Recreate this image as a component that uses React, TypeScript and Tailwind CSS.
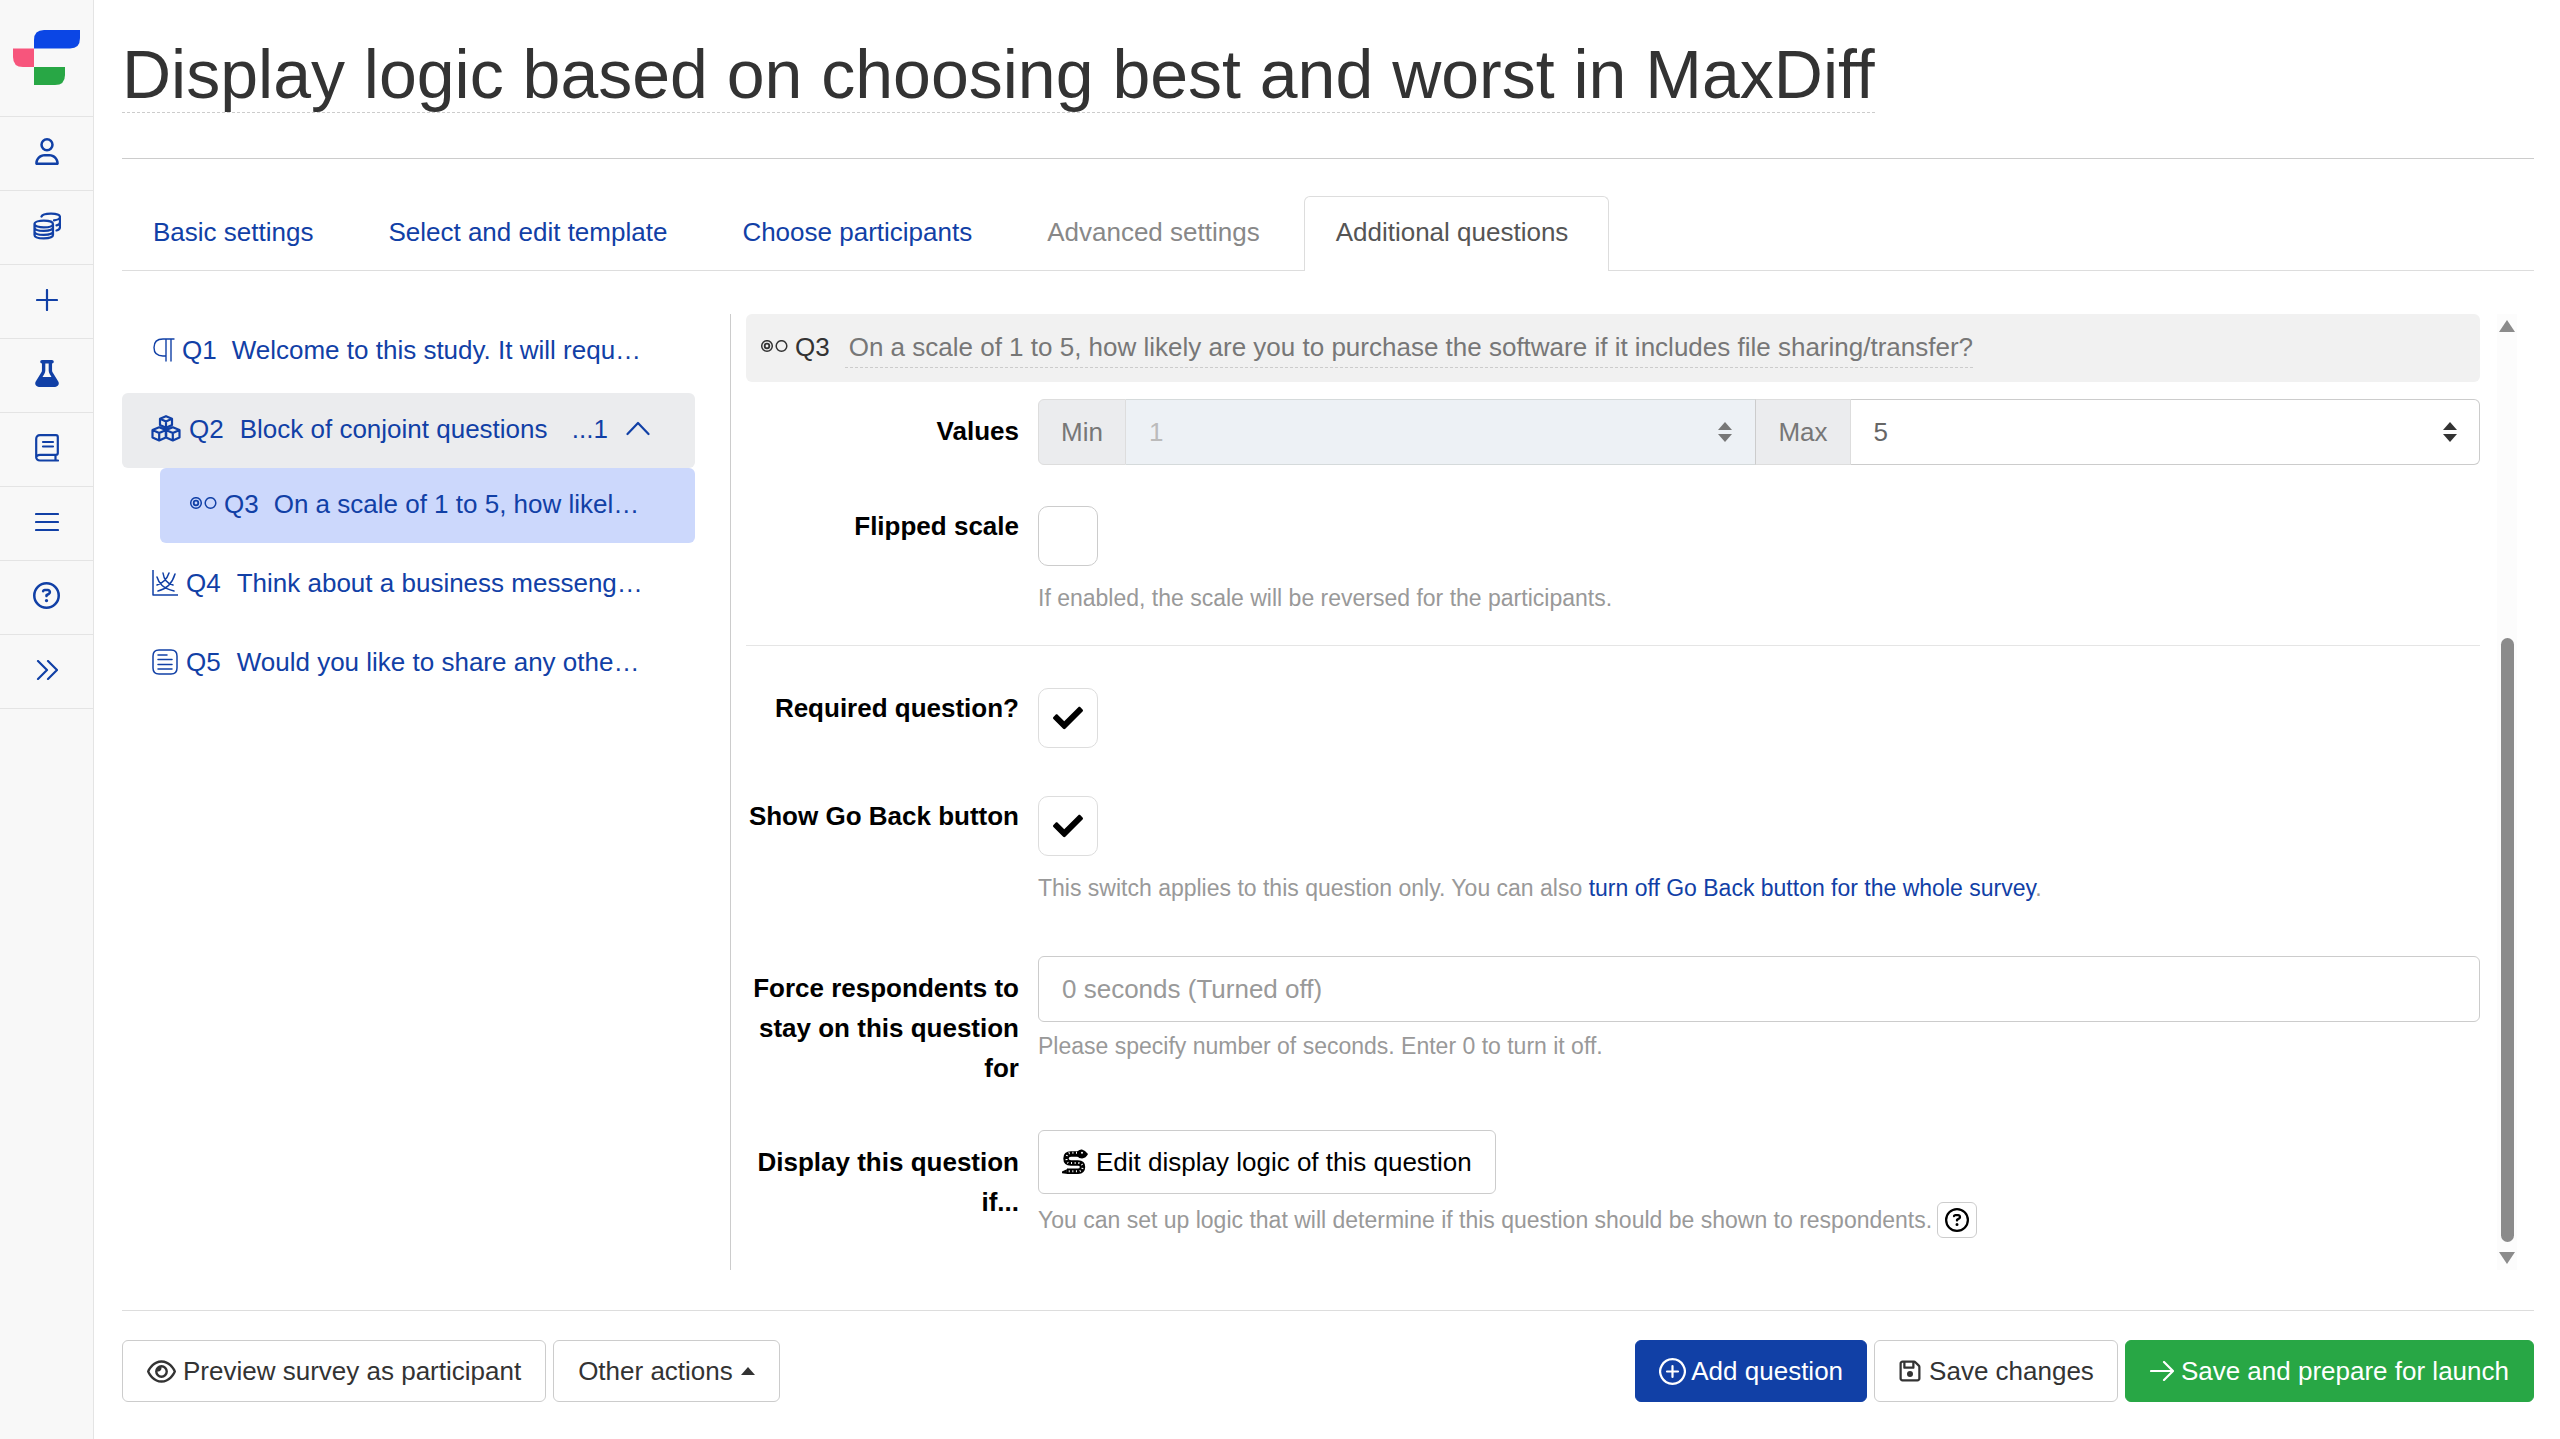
import React from "react";
import { FaRegUser, FaFlask, FaRegCircleQuestion, FaRegEye, FaRegFloppyDisk } from "react-icons/fa6";
import { FaCheck } from "react-icons/fa";

const Stroke = ({ d, w, h, box, sw = 3 }: { d: string; w: number; h: number; box: string; sw?: number }) => (
  <svg width={w} height={h} viewBox={box} fill="none" stroke="currentColor" strokeWidth={sw} strokeLinecap="round" strokeLinejoin="round" aria-hidden="true" className="shrink-0">
    <path d={d} />
  </svg>
);

const Logo = () => (
  <svg width="68" height="56" viewBox="0 0 68 56" role="img" aria-label="Home">
    <path d="M21 18.500V10Q21 0 31 0H67V8Q67 18.500 57 18.500Z" fill="#0b46e5" />
    <path d="M0 18.500H21V37H10Q0 37 0 27Z" fill="#f7557c" />
    <path d="M21 37H52V45Q52 55 42 55H21Z" fill="#28a745" />
  </svg>
);

const Coins = () => (
  <Stroke w={28} h={28} box="0 0 28 28" sw={2.2}
    d="M1.500 12C1.500 7.500 20 7.500 20 12C20 16.500 1.500 16.500 1.500 12V23C1.500 27.500 20 27.500 20 23V12M1.500 15.500C1.500 20 20 20 20 15.500M1.500 19.500C1.500 24 20 24 20 19.500M8.500 4.500C10 0.500 27 0.500 27 5V15C27 17 25.500 18 23.500 18.500M27 5C27 7 24 8 21 8.300M27 10C27 12 25.500 13 23.500 13.300" />
);
const Book = () => (
  <Stroke w={24} h={28} box="0 0 24 28" sw={2.2}
    d="M23 26.500H5C2.500 26.500 1.200 25 1.200 23V5C1.200 2.500 2.500 1.200 5 1.200H21C22.300 1.200 22.800 1.700 22.800 3V19C22.800 20.300 22.300 20.800 21 20.800H5C2.500 20.800 1.200 22.300 1.200 24M20.500 21V26M8 8H18M8 12.500H18" />
);

const navItems = [
  { label: "Account", icon: <FaRegUser className="h-[27px] w-6" /> },
  { label: "Credits", icon: <Coins /> },
  { label: "Create", icon: <Stroke w={22} h={22} box="0 0 22 22" sw={2.2} d="M11 1V21M1 11H21" /> },
  { label: "Experiments", icon: <FaFlask className="h-[27px] w-6" /> },
  { label: "Guides", icon: <Book /> },
  { label: "Menu", icon: <Stroke w={24} h={20} box="0 0 24 20" sw={2.2} d="M1 2H23M1 10H23M1 18H23" /> },
  { label: "Help", icon: <FaRegCircleQuestion className="size-[27px]" /> },
  { label: "Expand", icon: <Stroke w={22} h={20} box="0 0 22 20" sw={2.2} d="M2 1L11 10L2 19M12 1L21 10L12 19" /> },
];

const Pilcrow = () => <Stroke w={22} h={24} box="0 0 22 24" sw={1.4} d="M21 1H10C4 1 1 4 1 9.500S4 18 10 18H13M13 1V23M18 1V23" />;
const Radios = () => (
  <svg width="28" height="14" viewBox="0 0 28 14" fill="none" stroke="currentColor" aria-hidden="true" className="shrink-0">
    <circle cx="7" cy="6" r="5.300" strokeWidth="1.500" />
    <circle cx="7" cy="6" r="2.300" strokeWidth="1.800" />
    <circle cx="21.500" cy="6" r="5.300" strokeWidth="1.500" />
  </svg>
);
const Chart = () => <Stroke w={26} h={26} box="0 0 26 26" sw={1.5} d="M1 0V25H26M5 7C7 14 11 18 22 21M11 3C12 9 14 13 21 15M23 4C20 14 15 19 6 21M17 3C15 9 11 13 5 15" />;
const Note = () => <Stroke w={26} h={26} box="0 0 26 26" sw={1.5} d="M7 1H19Q25 1 25 7V19Q25 25 19 25H7Q1 25 1 19V7Q1 1 7 1ZM6 6H15M6 10.500H20M6 15.500H20M6 20H20" />;
const Cubes = () => (
  <Stroke w={30} h={27} box="0 0 30 27" sw={2.2}
    d="M15 1.200L21 3.700V10L15 12.800L9 10V3.700ZM9.500 4L15 6.500L20.500 4M15 6.500V12.500M8.200 12.300L14.800 15V22.500L8.200 25.500L1.500 22.500V15ZM2 15.200L8.200 18L14.500 15.200M8.200 18V25M21.800 12.300L28.500 15V22.500L21.800 25.500L15.200 22.500V15ZM15.500 15.200L21.800 18L28 15.200M21.800 18V25" />
);
const Snake = () => (
  <svg width="26" height="26" viewBox="0 0 26 26" fill="none" aria-hidden="true" className="shrink-0">
    <path d="M17 5H9Q4 5 4 9.500T9 14H16Q20.500 14 20.500 18T16 22.300H5" stroke="currentColor" strokeWidth="5.400" />
    <path d="M6 19.800V25L0 24.200Q-0.500 22.500 1 22Z" fill="currentColor" />
    <path d="M15 3Q17 0 20 0.500Q23 1 26 5Q24 9 20 9.500Q17 9.500 15 7Z" fill="currentColor" />
    <path d="M15 3.700H9Q4.500 4 4.500 9.500T9 14H16Q20.500 14 20.500 18T16 22.300H4" stroke="#fff" strokeWidth="2" strokeDasharray="1 2.600" />
    <circle cx="20" cy="3.700" r="1" fill="#fff" />
  </svg>
);

const Caret = ({ cls }: { cls: string }) => (
  <svg width="16" height="20" viewBox="0 0 16 20" fill="currentColor" aria-hidden="true" className={cls}>
    <path d="M8 0L15 8H1ZM8 20L15 12H1Z" />
  </svg>
);

const label = "w-[273px] shrink-0 text-right font-bold text-black";
const btn = "flex items-center rounded-md border whitespace-nowrap";
const hint = "text-[23px] leading-8 text-[#999]";
const tab = "pt-4 pb-[18px]";

const Check = ({ id, checked }: { id: string; checked?: boolean }) => (
  <span className="relative block size-[60px]">
    <input id={id} type="checkbox" defaultChecked={checked} className={checked ? "peer block size-[60px] appearance-none rounded-[10px] border border-[#ddd]" : "peer block size-[60px] appearance-none rounded-[10px] border border-[#ccc]"} />
    <FaCheck className="pointer-events-none absolute inset-0 m-auto hidden size-[30px] text-black peer-checked:block" />
  </span>
);

const QuestionLink = ({ icon, id, text, cls }: { icon: React.ReactNode; id: string; text: string; cls: string }) => (
  <a href="#" className={"flex h-[75px] items-center pb-1 whitespace-nowrap " + cls}>
    {icon}
    <span>{id}</span>
    <span className="pl-2">{text}</span>
  </a>
);

export default function App() {
  return (
    <div className="flex min-h-screen bg-white font-['Liberation_Sans',Arial,sans-serif] text-[26px] leading-10 text-[#333]">
      <nav aria-label="Main" className="w-[94px] shrink-0 border-r border-[#e4e4e4] bg-[#f8f8f8]">
        <a href="#" className="flex h-[117px] items-center justify-center border-b border-[#e4e4e4]"><Logo /></a>
        {navItems.map((n) => (
          <a key={n.label} href="#" aria-label={n.label} className="flex h-[74px] items-center justify-center border-b border-[#e4e4e4] pb-1 text-[#1140a6]">{n.icon}</a>
        ))}
      </nav>

      <main className="flex min-w-0 flex-1 flex-col pr-[26px] pl-7">
        <header className="flex border-b border-[#ccc] pt-[37px] pb-[45px]">
          <h1 className="border-b border-dashed border-[#ccc] text-[68px] leading-[75px]">Display logic based on choosing best and worst in MaxDiff</h1>
        </header>

        <div role="tablist" className="mt-[37px] flex gap-[13px] border-b border-[#ddd] text-[#1140a6]">
          <button role="tab" className={tab + " px-[31px]"}>Basic settings</button>
          <button role="tab" className={tab + " px-[31px]"}>Select and edit template</button>
          <button role="tab" className={tab + " px-[31px]"}>Choose participants</button>
          <button role="tab" disabled className={tab + " px-[31px] text-[#888]"}>Advanced settings</button>
          <button role="tab" aria-selected="true" className="-mb-px rounded-t-md border border-b-0 border-[#ddd] bg-white pt-[15px] pr-10 pb-[19px] pl-[31px] text-[#555]">Additional questions</button>
        </div>

        <div className="mt-[43px] flex">
          <nav aria-label="Questions" className="w-[573px] shrink-0 text-[#1140a6]">
            <QuestionLink icon={<Pilcrow />} id="Q1" text="Welcome to this study. It will requ…" cls="gap-[7px] pl-[31px]" />
            <div className="mt-1 flex h-[75px] items-center rounded-md bg-[#ebecee] pr-[45px] pb-1 pl-[29px] whitespace-nowrap">
              <a href="#" className="flex items-center gap-2"><Cubes /><span>Q2</span><span className="pl-2">Block of conjoint questions</span></a>
              <span className="ml-auto">...1</span>
              <button aria-label="Collapse block" className="ml-[18px]"><Stroke w={24} h={15} box="0 0 24 15" sw={2.2} d="M1.500 13L12 2L22.500 13" /></button>
            </div>
            <QuestionLink icon={<Radios />} id="Q3" text="On a scale of 1 to 5, how likel…" cls="ml-[38px] gap-[7px] rounded-md bg-[#ccd8fc] pl-[29px]" />
            <QuestionLink icon={<Chart />} id="Q4" text="Think about a business messeng…" cls="mt-1 gap-2 pl-[30px]" />
            <QuestionLink icon={<Note />} id="Q5" text="Would you like to share any othe…" cls="mt-1 gap-2 pl-[30px]" />
          </nav>

          <form className="ml-[35px] min-w-0 flex-1 border-l border-[#ccc] pb-8 pl-[15px]">
            <div className="flex h-[68px] items-center gap-[7px] rounded-md bg-[#f1f1f1] pb-0.5 pl-[14px]">
              <Radios />
              <span>Q3</span>
              <span className="ml-2 border-b border-dashed border-[#ccc] pl-1 text-[#777]">On a scale of 1 to 5, how likely are you to purchase the software if it includes file sharing/transfer?</span>
            </div>

            <div className="mt-[17px] flex gap-[19px]">
              <span className={label + " pt-3"}>Values</span>
              <div className="flex h-[66px] flex-1">
                <label htmlFor="min" className="flex items-center rounded-l-md border border-[#ddd] bg-[#ebecee] px-[22px] text-[#777]">Min</label>
                <span className="relative flex-1">
                  <select id="min" disabled className="h-full w-full appearance-none border-y border-[#d5dadb] bg-[#edf1f5] px-[23px] text-[#bbb]"><option>1</option></select>
                  <Caret cls="pointer-events-none absolute top-[23px] right-[22px] text-[#777]" />
                </span>
                <label htmlFor="max" className="flex items-center border border-[#ddd] border-l-[#ccc] bg-[#ebecee] px-[22px] text-[#777]">Max</label>
                <span className="relative flex-1">
                  <select id="max" className="h-full w-full appearance-none rounded-r-md border border-l-0 border-[#ccc] bg-white px-[23px] text-[#666]"><option>5</option></select>
                  <Caret cls="pointer-events-none absolute top-[23px] right-[22px] text-[#333]" />
                </span>
              </div>
            </div>

            <div className="mt-[41px] flex gap-[19px]">
              <label htmlFor="flipped" className={label}>Flipped scale</label>
              <div>
                <Check id="flipped" />
                <p className={hint + " mt-4"}>If enabled, the scale will be reversed for the participants.</p>
              </div>
            </div>

            <hr className="mt-[31px] border-[#e5e5e5]" />

            <div className="mt-[42px] flex gap-[19px]">
              <label htmlFor="required" className={label}>Required question?</label>
              <Check id="required" checked />
            </div>

            <div className="mt-12 flex gap-[19px]">
              <label htmlFor="goback" className={label}>Show Go Back button</label>
              <div>
                <Check id="goback" checked />
                <p className={hint + " mt-4"}>This switch applies to this question only. You can also <a href="#" className="text-[#1140a6]">turn off Go Back button for the whole survey</a>.</p>
              </div>
            </div>

            <div className="mt-[52px] flex gap-[19px]">
              <label htmlFor="force" className={label + " pt-3"}>Force respondents to stay on this question for</label>
              <div className="flex-1">
                <input id="force" type="text" placeholder="0 seconds (Turned off)" className="block h-[66px] w-full rounded-md border border-[#ccc] px-[23px] placeholder:text-[#999]" />
                <p className={hint + " mt-2"}>Please specify number of seconds. Enter 0 to turn it off.</p>
              </div>
            </div>

            <div className="mt-[42px] flex gap-[19px]">
              <span className={label + " pt-3"}>Display this question if...</span>
              <div>
                <button type="button" className={btn + " h-16 gap-2 border-[#ccc] px-[23px] text-black"}>
                  <Snake />
                  Edit display logic of this question
                </button>
                <p className={hint + " mt-2 flex items-center gap-[5px]"}>
                  You can set up logic that will determine if this question should be shown to respondents.
                  <button type="button" aria-label="Help" className="flex h-9 w-10 items-center justify-center rounded-md border border-[#ccc] text-black"><FaRegCircleQuestion className="size-6" /></button>
                </p>
              </div>
            </div>
          </form>

          <div aria-hidden="true" className="mx-[17px] flex w-5 shrink-0 flex-col items-center bg-[#fcfcfc]">
            <svg width="16" height="12" viewBox="0 0 16 12" className="mt-1.5" fill="#8b8b8b"><path d="M8 0L16 12H0Z" /></svg>
            <span className="mt-auto h-[604px] w-[13px] rounded-full bg-[#8b8b8b]" />
            <svg width="16" height="12" viewBox="0 0 16 12" className="mt-2.5 mb-1.5" fill="#8b8b8b"><path d="M8 12L16 0H0Z" /></svg>
          </div>
        </div>

        <footer className="mt-10 flex h-[92px] gap-[7px] border-t border-[#ddd] pt-[29px]">
          <button className={btn + " gap-[7px] border-[#ccc] px-6"}><FaRegEye className="size-[29px]" />Preview survey as participant</button>
          <button className={btn + " gap-2 border-[#ccc] px-6"}>Other actions<svg width="14" height="8" viewBox="0 0 14 8" fill="currentColor"><path d="M7 0L14 8H0Z" /></svg></button>
          <button className={btn + " ml-auto gap-[5px] border-[#1140a6] bg-[#1140a6] px-[23px] text-white"}>
            <Stroke w={27} h={27} box="0 0 27 27" sw={2.2} d="M13.500 1.200A12.300 12.300 0 1 1 13.499 1.200M13.500 8V19M8 13.500H19" />Add question</button>
          <button className={btn + " gap-[7px] border-[#ccc] px-[23px]"}><FaRegFloppyDisk className="size-6" />Save changes</button>
          <button className={btn + " gap-[7px] border-[#28a745] bg-[#28a745] px-6 text-white"}>
            <Stroke w={24} h={20} box="0 0 24 20" sw={2.2} d="M1 10H22.500M14 1L23 10L14 19" />Save and prepare for launch</button>
        </footer>
      </main>
    </div>
  );
}
